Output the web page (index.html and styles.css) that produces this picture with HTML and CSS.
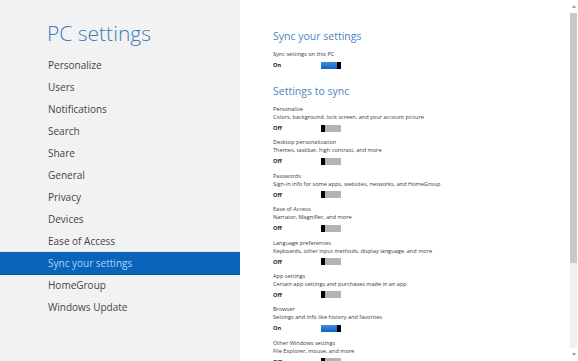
FILE: index.html
```html
<!DOCTYPE html>
<html lang="en">
<head>
    <meta charset="UTF-8">
    <title>PC settings</title>
    <link rel="stylesheet" href="styles.css">
</head>
<body>

<div class="app">
    <aside class="sidebar">
        <h1>PC settings</h1>
        <nav>
            <a>Personalize</a>
            <a>Users</a>
            <a>Notifications</a>
            <a>Search</a>
            <a>Share</a>
            <a>General</a>
            <a>Privacy</a>
            <a>Devices</a>
            <a>Ease of Access</a>
            <a class="active">Sync your settings</a>
            <a>HomeGroup</a>
            <a>Windows Update</a>
        </nav>
    </aside>

    <main class="content">
        <h2>Sync your settings</h2>
        <div class="setting first">
            <div class="name">Sync settings on this PC</div>
            <div class="state"><b>On</b><span class="toggle on"></span></div>
        </div>

        <h2 class="second">Settings to sync</h2>

        <div class="setting">
            <div class="name">Personalize</div>
            <div class="desc">Colors, background, lock screen, and your account picture</div>
            <div class="state"><b>Off</b><span class="toggle"></span></div>
        </div>
        <div class="setting">
            <div class="name">Desktop personalization</div>
            <div class="desc">Themes, taskbar, high contrast, and more</div>
            <div class="state"><b>Off</b><span class="toggle"></span></div>
        </div>
        <div class="setting">
            <div class="name">Passwords</div>
            <div class="desc">Sign-in info for some apps, websites, networks, and HomeGroup</div>
            <div class="state"><b>Off</b><span class="toggle"></span></div>
        </div>
        <div class="setting">
            <div class="name">Ease of Access</div>
            <div class="desc">Narrator, Magnifier, and more</div>
            <div class="state"><b>Off</b><span class="toggle"></span></div>
        </div>
        <div class="setting">
            <div class="name">Language preferences</div>
            <div class="desc">Keyboards, other input methods, display language, and more</div>
            <div class="state"><b>Off</b><span class="toggle"></span></div>
        </div>
        <div class="setting">
            <div class="name">App settings</div>
            <div class="desc">Certain app settings and purchases made in an app</div>
            <div class="state"><b>Off</b><span class="toggle"></span></div>
        </div>
        <div class="setting">
            <div class="name">Browser</div>
            <div class="desc">Settings and info like history and favorites</div>
            <div class="state"><b>On</b><span class="toggle on"></span></div>
        </div>
        <div class="setting">
            <div class="name">Other Windows settings</div>
            <div class="desc">File Explorer, mouse, and more</div>
            <div class="state"><b>Off</b><span class="toggle"></span></div>
        </div>
    </main>

    <div class="scrollbar">
        <span class="arrow up"></span>
        <span class="thumb"></span>
        <span class="track"></span>
        <span class="arrow down"></span>
    </div>
</div>

</body>
</html>
```

FILE: styles.css
```css
body {
    margin: 0;
    font-family: "Open Sans", "Noto Sans", sans-serif;
    background: #fff;
}
.app {
    display: flex;
    height: 361px;
    overflow: hidden;
}
.sidebar {
    width: 240px;
    flex: none;
    background: #f2f2f2;
}
.sidebar h1 {
    margin: 17px 0 5px 47px;
    font-size: 21px;
    font-weight: 300;
    line-height: 32px;
    color: #3b7cbd;
}
.sidebar nav a {
    display: block;
    height: 22px;
    line-height: 22px;
    padding-left: 48px;
    font-size: 10px;
    color: #444;
}
.sidebar nav a.active {
    background: #0a64b9;
    color: #a9d4ff;
    border-top: 1px solid #dceaf7;
    border-bottom: 1px solid #0b4f90;
    margin: -1px 0;
    height: 22px;
}
.content {
    flex: 1;
    padding: 29px 0 0 33px;
    font-size: 5.6px;
    color: #3a3a3a;
}
.content h2 {
    margin: 0;
    font-size: 10.5px;
    font-weight: 400;
    line-height: 14px;
    color: #4a86c0;
}
.content h2.second {
    margin: 15px 0 7px;
}
.setting {
    height: 33.4px;
}
.setting.first {
    height: auto;
    margin-top: 7px;
}
.name, .desc {
    line-height: 8px;
    white-space: nowrap;
}
.state {
    display: flex;
    align-items: center;
    height: 8px;
    margin-top: 3px;
}
.state b {
    width: 48px;
    font-weight: 700;
    color: #222;
}
.toggle {
    width: 16px;
    height: 7px;
    background: #b3b3b3;
    border-left: 4px solid #000;
}
.toggle.on {
    background: linear-gradient(#3f8ee0, #0f62be);
    border-left: none;
    border-right: 4px solid #000;
}
.scrollbar {
    width: 7px;
    margin-right: 1px;
    display: flex;
    flex-direction: column;
    align-items: center;
}
.arrow {
    width: 0;
    height: 0;
    border-left: 2px solid transparent;
    border-right: 2px solid transparent;
    margin: 5px 0;
}
.arrow.up {
    border-bottom: 3px solid #9a9a9a;
}
.arrow.down {
    border-top: 3px solid #9a9a9a;
}
.thumb {
    width: 7px;
    height: 250px;
    background: #c9c9c9;
}
.track {
    width: 7px;
    flex: 1;
    background: #f1f1f1;
}
```
